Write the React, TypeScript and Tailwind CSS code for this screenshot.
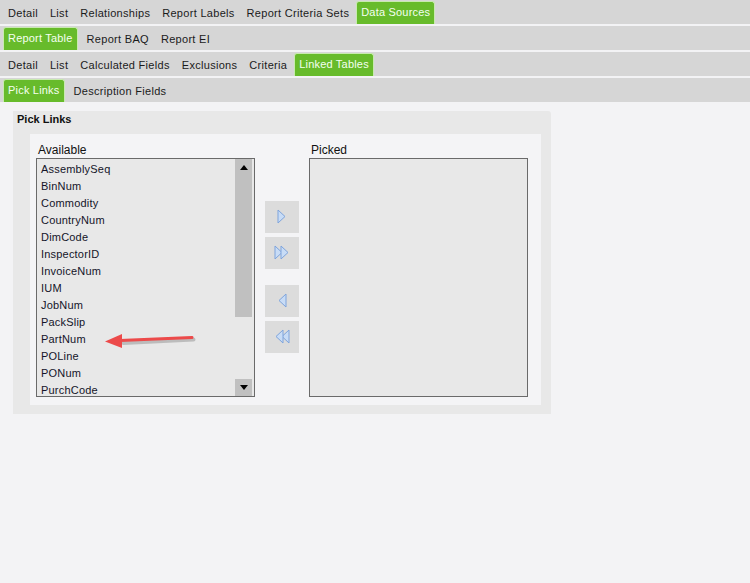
import React from 'react'

type Tab = { label: string; active?: boolean }

const rows: Tab[][] = [
  [
    { label: 'Detail' },
    { label: 'List' },
    { label: 'Relationships' },
    { label: 'Report Labels' },
    { label: 'Report Criteria Sets' },
    { label: 'Data Sources', active: true },
  ],
  [{ label: 'Report Table', active: true }, { label: 'Report BAQ' }, { label: 'Report EI' }],
  [
    { label: 'Detail' },
    { label: 'List' },
    { label: 'Calculated Fields' },
    { label: 'Exclusions' },
    { label: 'Criteria' },
    { label: 'Linked Tables', active: true },
  ],
  [{ label: 'Pick Links', active: true }, { label: 'Description Fields' }],
]

const fields = [
  'AssemblySeq', 'BinNum', 'Commodity', 'CountryNum', 'DimCode', 'InspectorID', 'InvoiceNum',
  'IUM', 'JobNum', 'PackSlip', 'PartNum', 'POLine', 'PONum', 'PurchCode',
]

function TabBar({ tabs }: { tabs: Tab[] }) {
  return (
    <div className="flex h-[24px] items-end bg-[#d6d6d6] pl-[2px] mb-[2px]">
      {tabs.map(t =>
        t.active ? (
          <div
            key={t.label}
            className="h-[23px] ml-[1px] mr-[3px] px-[4px] pt-[2px] rounded-t-[3px] border border-b-0 border-[#c8eab0] bg-[#67bb2b] text-[#f4fff0] leading-[17px] tracking-[0.2px]"
          >
            {t.label}
          </div>
        ) : (
          <div key={t.label} className="h-[24px] px-[6px] pt-[6px] text-[#1b1b1b] leading-[14px] tracking-[0.3px]">
            {t.label}
          </div>
        )
      )}
    </div>
  )
}

function Arrow({ dir, double }: { dir: 'right' | 'left'; double?: boolean }) {
  const single = 'M1 1 L8 7.5 L1 14 Z'
  return (
    <button className="w-[34px] h-[32px] bg-[#dcdcdc] flex items-center justify-center">
      <svg width={double ? 16 : 10} height="16" viewBox={double ? '0 0 16 16' : '0 0 10 16'}
        className={dir === 'left' ? 'scale-x-[-1]' : ''}>
        <path d={single} fill="#c8dcf6" stroke="#7ea4dc" strokeWidth="1" />
        {double && <path d="M7 1 L14 7.5 L7 14 Z" fill="#c8dcf6" stroke="#7ea4dc" strokeWidth="1" />}
      </svg>
    </button>
  )
}

export default function App() {
  return (
    <div className="w-[750px] h-[583px] bg-[#f3f3f5] text-[11px] font-['Liberation_Sans',Arial,sans-serif]">
      {rows.map((r, i) => (
        <TabBar key={i} tabs={r} />
      ))}

      <div className="ml-[13px] mt-[9px] w-[538px] h-[303px] bg-[#e8e8e8] rounded-tr-[3px] pb-[9px] flex flex-col">
        <div className="h-[23px] pl-[4px] pt-[2px] font-bold text-[#111] leading-[12px]">Pick Links</div>
        <div className="flex-1 mx-[17px] mr-[10px] bg-[#f4f4f6] pl-[6px] pt-[9px] flex">
          <div className="w-[219px]">
            <div className="h-[15px] pl-[2px] text-[12px] leading-[14px] text-[#111]">Available</div>
            <div className="h-[239px] border border-[#6a6a6a] bg-[#e8e8e8] flex">
              <div className="flex-1 pl-[4px] pt-[2px]">
                {fields.map(f => (
                  <div key={f} className="h-[17px] leading-[17px] text-[#141428] tracking-[0.2px]">{f}</div>
                ))}
              </div>
              <div className="w-[17px] mr-[2px] flex flex-col bg-[#e8e8e8]">
                <div className="h-[158px] bg-[#c0c0c0] flex justify-center pt-[6px]">
                  <svg width="8" height="5" viewBox="0 0 8 5"><path d="M0 5 L4 0 L8 5 Z" fill="#000" /></svg>
                </div>
                <div className="flex-1" />
                <div className="h-[17px] bg-[#c0c0c0] flex justify-center items-center">
                  <svg width="8" height="5" viewBox="0 0 8 5"><path d="M0 0 L4 5 L8 0 Z" fill="#000" /></svg>
                </div>
              </div>
            </div>
          </div>

          <div className="w-[54px] pl-[10px] pt-[58px] flex flex-col">
            <Arrow dir="right" />
            <div className="h-[4px]" />
            <Arrow dir="right" double />
            <div className="h-[16px]" />
            <Arrow dir="left" />
            <div className="h-[4px]" />
            <Arrow dir="left" double />
          </div>

          <div className="w-[219px]">
            <div className="h-[15px] pl-[2px] text-[12px] leading-[14px] text-[#111]">Picked</div>
            <div className="h-[239px] border border-[#6a6a6a] bg-[#e8e8e8]" />
          </div>
        </div>
      </div>

      <svg className="absolute left-[100px] top-[330px]" width="100" height="22" viewBox="0 0 100 22">
        <path d="M92 7.5 L22 11" stroke="#00000030" strokeWidth="4" strokeLinecap="round" transform="translate(1.5,2)" />
        <path d="M92 7.5 L20 10.5" stroke="#ec4a4a" strokeWidth="3" strokeLinecap="round" />
        <path d="M5 11.5 L22 4 L22 18 Z" fill="#ec4a4a" />
      </svg>
    </div>
  )
}
